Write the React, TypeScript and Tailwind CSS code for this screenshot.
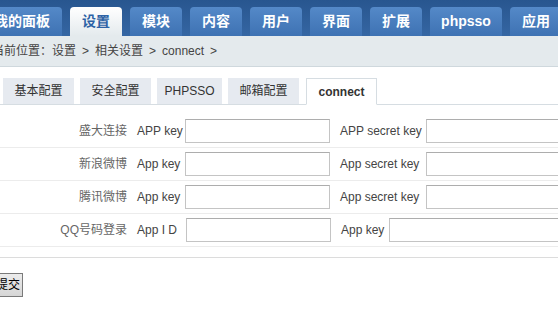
import React from 'react';

const navTabs = [
	{ label: '我的面板', w: 'w-[80px]' },
	{ label: '设置', w: 'w-[52px]', active: true },
	{ label: '模块', w: 'w-[52px]' },
	{ label: '内容', w: 'w-[52px]' },
	{ label: '用户', w: 'w-[52px]' },
	{ label: '界面', w: 'w-[52px]' },
	{ label: '扩展', w: 'w-[52px]' },
	{ label: 'phpsso', w: 'w-[72px]' },
	{ label: '应用', w: 'w-[52px]' },
];

const subTabs = [
	{ label: '基本配置', w: 'w-[71px]' },
	{ label: '安全配置', w: 'w-[71px]' },
	{ label: 'PHPSSO', w: 'w-[65px]' },
	{ label: '邮箱配置', w: 'w-[71px]' },
	{ label: 'connect', w: 'w-[71px]', active: true },
];

// 每行：名称、两个字段标签，以及标签所占宽度
const rows = [
	{ name: '盛大连接', k1: 'APP key', k2: 'APP secret key', w1: 'w-[48px]', wk2: 'w-[86px]', w2: 'w-[160px]' },
	{ name: '新浪微博', k1: 'App key', k2: 'App secret key', w1: 'w-[48px]', wk2: 'w-[86px]', w2: 'w-[160px]' },
	{ name: '腾讯微博', k1: 'App key', k2: 'App secret key', w1: 'w-[48px]', wk2: 'w-[86px]', w2: 'w-[160px]' },
	{ name: 'QQ号码登录', k1: 'App I D', k2: 'App key', w1: 'w-[49px]', wk2: 'w-[48px]', w2: 'w-[200px]' },
];

function Sep() {
	return <span className="px-[6px]">&gt;</span>;
}

export default function App() {
	return (
		<div className="w-[558px] h-[326px] overflow-hidden bg-white text-[12px] font-['Liberation_Sans','Noto_Sans_CJK_SC',sans-serif]">
			<div className="-ml-[18px]">
				{/* 顶部导航 */}
				<div className="h-[36px] bg-gradient-to-b from-[#28568f] to-[#3566a3] flex items-end gap-2">
					{navTabs.map((t) => (
						<div
							key={t.label}
							className={`${t.w} shrink-0 h-[29px] rounded-t-[4px] flex items-center justify-center text-[14px] font-bold ${
								t.active
									? 'bg-gradient-to-b from-white to-[#e4eaed] text-[#2d62a5]'
									: 'bg-gradient-to-b from-[#5489c8] to-[#3e72b3] text-white'
							}`}
						>
							{t.label}
						</div>
					))}
				</div>

				{/* 当前位置 */}
				<div className="h-[31px] bg-[#e4eaed] border-b border-[#cfd8dd] pl-[10px] flex items-center text-[#444] whitespace-nowrap">
					当前位置：设置<Sep />相关设置<Sep />connect<Sep />
				</div>

				{/* 子标签 */}
				<div className="mt-[11px] pl-[21px] flex items-end gap-[6px] border-b border-[#d6dde2] h-[27px]">
					{subTabs.map((t) => (
						<div
							key={t.label}
							className={`${t.w} shrink-0 h-[26px] flex items-center justify-center ${
								t.active
									? 'ml-[1px] bg-white border border-[#d6dde2] border-b-white -mb-[1px] h-[27px] font-bold text-[#333]'
									: 'bg-[#e6eaf0] text-[#333]'
							}`}
						>
							{t.label}
						</div>
					))}
				</div>

				{/* 表单 */}
				<div className="mt-[10px]">
					{rows.map((r) => (
						<div key={r.name} className="h-[33px] border-b border-[#ececec] flex items-center whitespace-nowrap">
							<div className="w-[145px] shrink-0 text-right text-[#666]">{r.name}</div>
							<span className={`ml-[10px] ${r.w1} shrink-0 text-[#444]`}>{r.k1}</span>
							<input className="w-[145px] h-[24px] shrink-0 border border-[#c4c4c4] border-t-[#adadad] bg-white" />
							<span className={`ml-[10px] ${r.wk2} shrink-0 text-[#444]`}>{r.k2}</span>
							<input className={`${r.w2} h-[24px] shrink-0 border border-[#c4c4c4] border-t-[#adadad] bg-white`} />
						</div>
					))}
				</div>

				<div className="mt-[10px] border-t border-[#dcdcdc]" />

				<div className="mt-[15px] pl-[11px]">
					<button className="h-[24px] px-[2px] bg-gradient-to-b from-[#ececec] to-[#d6d6d6] border border-[#7a7a7a] text-[12px] text-black leading-none">
						提交
					</button>
				</div>
			</div>
		</div>
	);
}
